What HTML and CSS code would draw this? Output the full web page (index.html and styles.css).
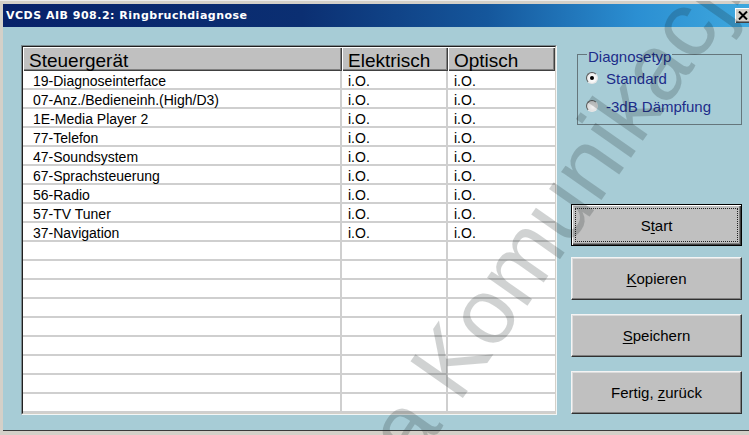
FILE: index.html
```html
<!DOCTYPE html>
<html lang="de">
<head>
<meta charset="utf-8">
<title>VCDS AIB 908.2: Ringbruchdiagnose</title>
<link rel="stylesheet" href="styles.css">
</head>
<body>
<div class="window">
  <div class="titlebar">
    <span class="title">VCDS AIB 908.2: Ringbruchdiagnose</span>
    <span class="close">
      <svg width="10" height="9" viewBox="0 0 10 9"><path d="M1 0.5 L9 8.5 M9 0.5 L1 8.5" stroke="#000" stroke-width="2"/></svg>
    </span>
  </div>
  <div class="client">
    <div class="list">
      <div class="list-inner">
        <div class="list-head">
          <div class="hcell">Steuergerät</div>
          <div class="hcell">Elektrisch</div>
          <div class="hcell">Optisch</div>
        </div>
        <div class="list-body">
          <div class="row"><div class="cell">19-Diagnoseinterface</div><div class="cell">i.O.</div><div class="cell">i.O.</div></div>
          <div class="row"><div class="cell">07-Anz./Bedieneinh.(High/D3)</div><div class="cell">i.O.</div><div class="cell">i.O.</div></div>
          <div class="row"><div class="cell">1E-Media Player 2</div><div class="cell">i.O.</div><div class="cell">i.O.</div></div>
          <div class="row"><div class="cell">77-Telefon</div><div class="cell">i.O.</div><div class="cell">i.O.</div></div>
          <div class="row"><div class="cell">47-Soundsystem</div><div class="cell">i.O.</div><div class="cell">i.O.</div></div>
          <div class="row"><div class="cell">67-Sprachsteuerung</div><div class="cell">i.O.</div><div class="cell">i.O.</div></div>
          <div class="row"><div class="cell">56-Radio</div><div class="cell">i.O.</div><div class="cell">i.O.</div></div>
          <div class="row"><div class="cell">57-TV Tuner</div><div class="cell">i.O.</div><div class="cell">i.O.</div></div>
          <div class="row"><div class="cell">37-Navigation</div><div class="cell">i.O.</div><div class="cell">i.O.</div></div>
          <div class="row"><div class="cell"></div><div class="cell"></div><div class="cell"></div></div>
          <div class="row"><div class="cell"></div><div class="cell"></div><div class="cell"></div></div>
          <div class="row"><div class="cell"></div><div class="cell"></div><div class="cell"></div></div>
          <div class="row"><div class="cell"></div><div class="cell"></div><div class="cell"></div></div>
          <div class="row"><div class="cell"></div><div class="cell"></div><div class="cell"></div></div>
          <div class="row"><div class="cell"></div><div class="cell"></div><div class="cell"></div></div>
          <div class="row"><div class="cell"></div><div class="cell"></div><div class="cell"></div></div>
          <div class="row"><div class="cell"></div><div class="cell"></div><div class="cell"></div></div>
          <div class="row"><div class="cell"></div><div class="cell"></div><div class="cell"></div></div>
        </div>
      </div>
    </div>
    <div class="side">
      <fieldset class="group">
        <legend>Diagnosetyp</legend>
        <div class="radio"><span class="radio-dot checked"></span><span>Standard</span></div>
        <div class="radio"><span class="radio-dot off"></span><span>-3dB Dämpfung</span></div>
      </fieldset>
      <div class="buttons">
        <div class="btn btn-default"><div class="focus"><span>S<u>t</u>art</span></div></div>
        <div class="btn btn-first"><span><u>K</u>opieren</span></div>
        <div class="btn"><span><u>S</u>peichern</span></div>
        <div class="btn"><span>Fertig, <u>z</u>urück</span></div>
      </div>
    </div>
  </div>
  <div class="watermark">a Komunikacji</div>
</div>
</body>
</html>
```
FILE: styles.css
```css
html, body {
  margin: 0;
  padding: 0;
}

body {
  width: 749px;
  height: 435px;
  overflow: hidden;
  background: #d4d0c8;
  font-family: "Liberation Sans", Arial, sans-serif;
  color: #000;
}

.window {
  position: relative;
  width: 749px;
  height: 435px;
  box-sizing: border-box;
  padding: 3px 0 0 3px;
  background: #d4d0c8;
  border-top: 1px solid #ececec;
  overflow: hidden;
}

/* caption bar */
.titlebar {
  height: 23px;
  display: flex;
  align-items: center;
  justify-content: space-between;
  padding-left: 3px;
  background: linear-gradient(90deg, #08226a 0%, #0b2f72 40%, #15579c 65%, #2b8fd2 85%, #3fa8de 100%);
}

.title {
  font-family: "DejaVu Sans", Verdana, sans-serif;
  font-weight: bold;
  font-size: 11px;
  letter-spacing: 0.5px;
  color: #fff;
}

.close {
  width: 16px;
  height: 15px;
  margin-right: -2px;
  display: flex;
  align-items: center;
  justify-content: center;
  background: #d4d0c8;
  box-shadow: inset 1px 1px #fff, inset -1px -1px #404040, inset -2px -2px #808080;
}

/* dialog body */
.client {
  height: 404px;
  box-sizing: border-box;
  display: flex;
  align-items: flex-start;
  gap: 14px;
  padding: 18px 0 0 18px;
  background: #a7ccd6;
  border-bottom: 1px solid #3a3a3a;
}

/* list view */
.list {
  width: 536px;
  height: 370px;
  box-sizing: border-box;
  border: 1px solid;
  border-color: #7a8a90 #f2f6f7 #f2f6f7 #7a8a90;
  flex: none;
}

.list-inner {
  height: 100%;
  box-sizing: border-box;
  border: 1px solid;
  border-color: #202020 #d4d0c8 #d4d0c8 #202020;
  background: #fff;
  overflow: hidden;
}

.list-head {
  display: grid;
  grid-template-columns: 319px 106px 107px;
}

.hcell {
  height: 24px;
  box-sizing: border-box;
  padding: 3px 0 0 6px;
  font-size: 19px;
  line-height: 21px;
  background: #c0c0c0;
  box-shadow: inset 1px 1px #fff, inset -1px -1px #404040, inset -2px -2px #808080;
  white-space: nowrap;
  overflow: hidden;
}

.row {
  display: grid;
  grid-template-columns: 319px 106px 107px;
}

.cell {
  height: 19px;
  box-sizing: border-box;
  padding: 2px 0 0 6px;
  font-size: 14px;
  line-height: 17px;
  border-bottom: 2px solid #cfcfcf;
  border-right: 2px solid #cfcfcf;
  white-space: nowrap;
}

.cell:first-child {
  padding-left: 10px;
}

.cell:last-child {
  border-right: none;
}

/* right-hand column */
.side {
  width: 171px;
  flex: none;
  display: flex;
  flex-direction: column;
}

.group {
  margin: -2px 0 0 6px;
  width: 165px;
  box-sizing: border-box;
  padding: 1px 0 4px 9px;
  border: 1px solid #65767c;
  min-width: 0;
}

.group legend {
  padding: 6px 1px 0 1px;
  font-size: 15px;
  line-height: 16px;
  color: #1d2c8a;
}

.radio {
  height: 28px;
  display: flex;
  align-items: center;
  gap: 8px;
  margin-left: -1px;
  font-size: 15px;
  line-height: 17px;
  color: #1d2c8a;
}

.radio:first-of-type {
  margin-top: -2px;
}

.radio-dot {
  width: 12px;
  height: 12px;
  box-sizing: border-box;
  border-radius: 50%;
  border: 1px solid;
  border-color: #5a5a5a #e6e6e6 #e6e6e6 #5a5a5a;
  background: radial-gradient(circle at 60% 60%, #ffffff 0%, #f2f2f2 55%, #cfcfcf 100%);
  display: flex;
  align-items: center;
  justify-content: center;
  flex: none;
}

.radio-dot.off {
  background: radial-gradient(circle at 60% 60%, #f2f2f2 0%, #dcdcdc 60%, #bdbdbd 100%);
}

.radio-dot.checked::after {
  content: "";
  width: 4px;
  height: 4px;
  border-radius: 50%;
  background: #000;
}

.buttons {
  margin-top: 79px;
  display: flex;
  flex-direction: column;
  gap: 14px;
}

.btn {
  height: 43px;
  box-sizing: border-box;
  display: flex;
  align-items: center;
  justify-content: center;
  font-size: 15px;
  background: #c0c0c0;
  border: 1px solid;
  border-color: #f4f4f4 #303030 #303030 #f4f4f4;
  box-shadow: inset -1px -1px #808080, inset 1px 1px #dcdcdc;
}

.btn-default {
  height: 42px;
  padding: 3px;
  border: 1px solid #000;
  box-shadow: inset 1px 1px #fff, inset -1px -1px #404040, inset -2px -2px #808080;
  align-items: stretch;
}

.btn-first {
  margin-top: -3px;
}

.focus {
  flex: 1;
  display: flex;
  align-items: center;
  justify-content: center;
  border: 1px dotted #222;
}

.btn u {
  text-underline-offset: 2px;
}

/* diagonal publisher mark laid across the dialog */
.watermark {
  position: absolute;
  left: 350px;
  top: 422px;
  font-family: "Liberation Sans", Arial, sans-serif;
  font-size: 93px;
  line-height: 1;
  white-space: nowrap;
  color: rgba(20, 28, 32, 0.2);
  transform-origin: 0 0;
  transform: rotate(-55deg);
  pointer-events: none;
}
```
